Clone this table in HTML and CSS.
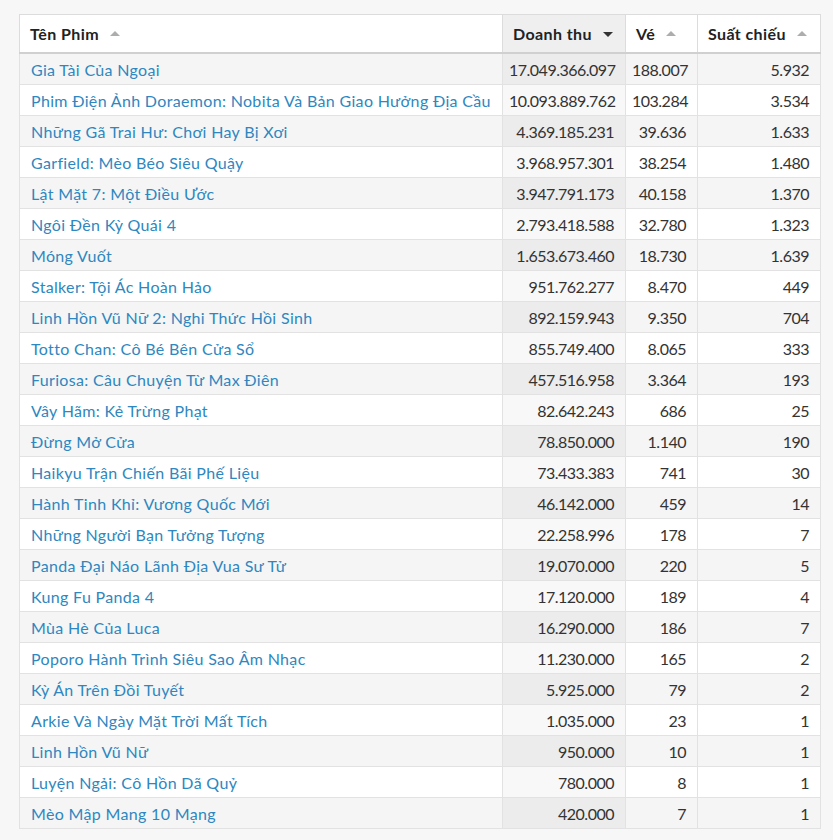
FILE: index.html
```html
<!DOCTYPE html>
<html lang="vi">
<head>
<meta charset="utf-8">
<title>Doanh thu phim</title>
<link rel="stylesheet" href="styles.css">
</head>
<body>
<div class="wrap">
<table class="grid">
<colgroup>
<col class="c-name"><col class="c-rev"><col class="c-tix"><col class="c-show">
</colgroup>
<thead>
<tr>
<th>Tên Phim<span class="sort up"></span></th>
<th class="sorted">Doanh thu<span class="sort down"></span></th>
<th>Vé<span class="sort up"></span></th>
<th>Suất chiếu<span class="sort up"></span></th>
</tr>
</thead>
<tbody>
<tr><td><a>Gia Tài Của Ngoại</a></td><td class="num rev">17.049.366.097</td><td class="num">188.007</td><td class="num">5.932</td></tr>
<tr><td><a>Phim Điện Ảnh Doraemon: Nobita Và Bản Giao Hưởng Địa Cầu</a></td><td class="num rev">10.093.889.762</td><td class="num">103.284</td><td class="num">3.534</td></tr>
<tr><td><a>Những Gã Trai Hư: Chơi Hay Bị Xơi</a></td><td class="num rev">4.369.185.231</td><td class="num">39.636</td><td class="num">1.633</td></tr>
<tr><td><a>Garfield: Mèo Béo Siêu Quậy</a></td><td class="num rev">3.968.957.301</td><td class="num">38.254</td><td class="num">1.480</td></tr>
<tr><td><a>Lật Mặt 7: Một Điều Ước</a></td><td class="num rev">3.947.791.173</td><td class="num">40.158</td><td class="num">1.370</td></tr>
<tr><td><a>Ngôi Đền Kỳ Quái 4</a></td><td class="num rev">2.793.418.588</td><td class="num">32.780</td><td class="num">1.323</td></tr>
<tr><td><a>Móng Vuốt</a></td><td class="num rev">1.653.673.460</td><td class="num">18.730</td><td class="num">1.639</td></tr>
<tr><td><a>Stalker: Tội Ác Hoàn Hảo</a></td><td class="num rev">951.762.277</td><td class="num">8.470</td><td class="num">449</td></tr>
<tr><td><a>Linh Hồn Vũ Nữ 2: Nghi Thức Hồi Sinh</a></td><td class="num rev">892.159.943</td><td class="num">9.350</td><td class="num">704</td></tr>
<tr><td><a>Totto Chan: Cô Bé Bên Cửa Sổ</a></td><td class="num rev">855.749.400</td><td class="num">8.065</td><td class="num">333</td></tr>
<tr><td><a>Furiosa: Câu Chuyện Từ Max Điên</a></td><td class="num rev">457.516.958</td><td class="num">3.364</td><td class="num">193</td></tr>
<tr><td><a>Vây Hãm: Kẻ Trừng Phạt</a></td><td class="num rev">82.642.243</td><td class="num">686</td><td class="num">25</td></tr>
<tr><td><a>Đừng Mở Cửa</a></td><td class="num rev">78.850.000</td><td class="num">1.140</td><td class="num">190</td></tr>
<tr><td><a>Haikyu Trận Chiến Bãi Phế Liệu</a></td><td class="num rev">73.433.383</td><td class="num">741</td><td class="num">30</td></tr>
<tr><td><a>Hành Tinh Khỉ: Vương Quốc Mới</a></td><td class="num rev">46.142.000</td><td class="num">459</td><td class="num">14</td></tr>
<tr><td><a>Những Người Bạn Tưởng Tượng</a></td><td class="num rev">22.258.996</td><td class="num">178</td><td class="num">7</td></tr>
<tr><td><a>Panda Đại Náo Lãnh Địa Vua Sư Tử</a></td><td class="num rev">19.070.000</td><td class="num">220</td><td class="num">5</td></tr>
<tr><td><a>Kung Fu Panda 4</a></td><td class="num rev">17.120.000</td><td class="num">189</td><td class="num">4</td></tr>
<tr><td><a>Mùa Hè Của Luca</a></td><td class="num rev">16.290.000</td><td class="num">186</td><td class="num">7</td></tr>
<tr><td><a>Poporo Hành Trình Siêu Sao Âm Nhạc</a></td><td class="num rev">11.230.000</td><td class="num">165</td><td class="num">2</td></tr>
<tr><td><a>Kỳ Án Trên Đồi Tuyết</a></td><td class="num rev">5.925.000</td><td class="num">79</td><td class="num">2</td></tr>
<tr><td><a>Arkie Và Ngày Mặt Trời Mất Tích</a></td><td class="num rev">1.035.000</td><td class="num">23</td><td class="num">1</td></tr>
<tr><td><a>Linh Hồn Vũ Nữ</a></td><td class="num rev">950.000</td><td class="num">10</td><td class="num">1</td></tr>
<tr><td><a>Luyện Ngải: Cô Hồn Dã Quỷ</a></td><td class="num rev">780.000</td><td class="num">8</td><td class="num">1</td></tr>
<tr><td><a>Mèo Mập Mang 10 Mạng</a></td><td class="num rev">420.000</td><td class="num">7</td><td class="num">1</td></tr>
</tbody>
</table>
</div>
</body>
</html>
```
FILE: styles.css
```css
html, body {
  margin: 0;
  padding: 0;
  background: #f7f7f7;
}
body {
  font-family: "Lato", "Open Sans", sans-serif;
  color: #333;
}
.wrap {
  padding: 14px 13px 10px 19px;
}
.grid {
  width: 801px;
  border-collapse: collapse;
  table-layout: fixed;
  background: #fff;
  border: 1px solid #dcdcdc;
  font-size: 16px;
}
.c-name { width: 483px; }
.c-rev { width: 123px; }
.c-tix { width: 72px; }
.c-show { width: 123px; }

.grid th {
  height: 37px;
  padding: 0 10px;
  text-align: left;
  font-weight: 700;
  color: #222;
  letter-spacing: 0.4px;
  border: 1px solid #dcdcdc;
  border-bottom: 2px solid #d0d0d0;
  white-space: nowrap;
}
.grid th.sorted {
  background: #efefef;
}
.sort {
  display: inline-block;
  width: 0;
  height: 0;
  margin-left: 11px;
  vertical-align: 4px;
  border-left: 5px solid transparent;
  border-right: 5px solid transparent;
}
.sort.up {
  border-bottom: 5px solid #adadad;
}
.sort.down {
  border-top: 5px solid #333;
  vertical-align: 3px;
}
.grid td {
  height: 30px;
  padding: 0 10px 0 11px;
  border: 1px solid #e2e2e2;
  white-space: nowrap;
  overflow: hidden;
}
.grid tbody tr:nth-child(odd) td {
  background: #f5f5f5;
}
.grid tbody tr:nth-child(odd) td.rev {
  background: #ececec;
}
.grid tbody tr:nth-child(even) td.rev {
  background: #f8f8f8;
}
.grid td a {
  color: #2e87c0;
  letter-spacing: 0.33px;
}
.num {
  text-align: right;
}
.grid td.num {
  padding-right: 11px;
  padding-left: 6px;
  letter-spacing: -0.5px;
}
```
